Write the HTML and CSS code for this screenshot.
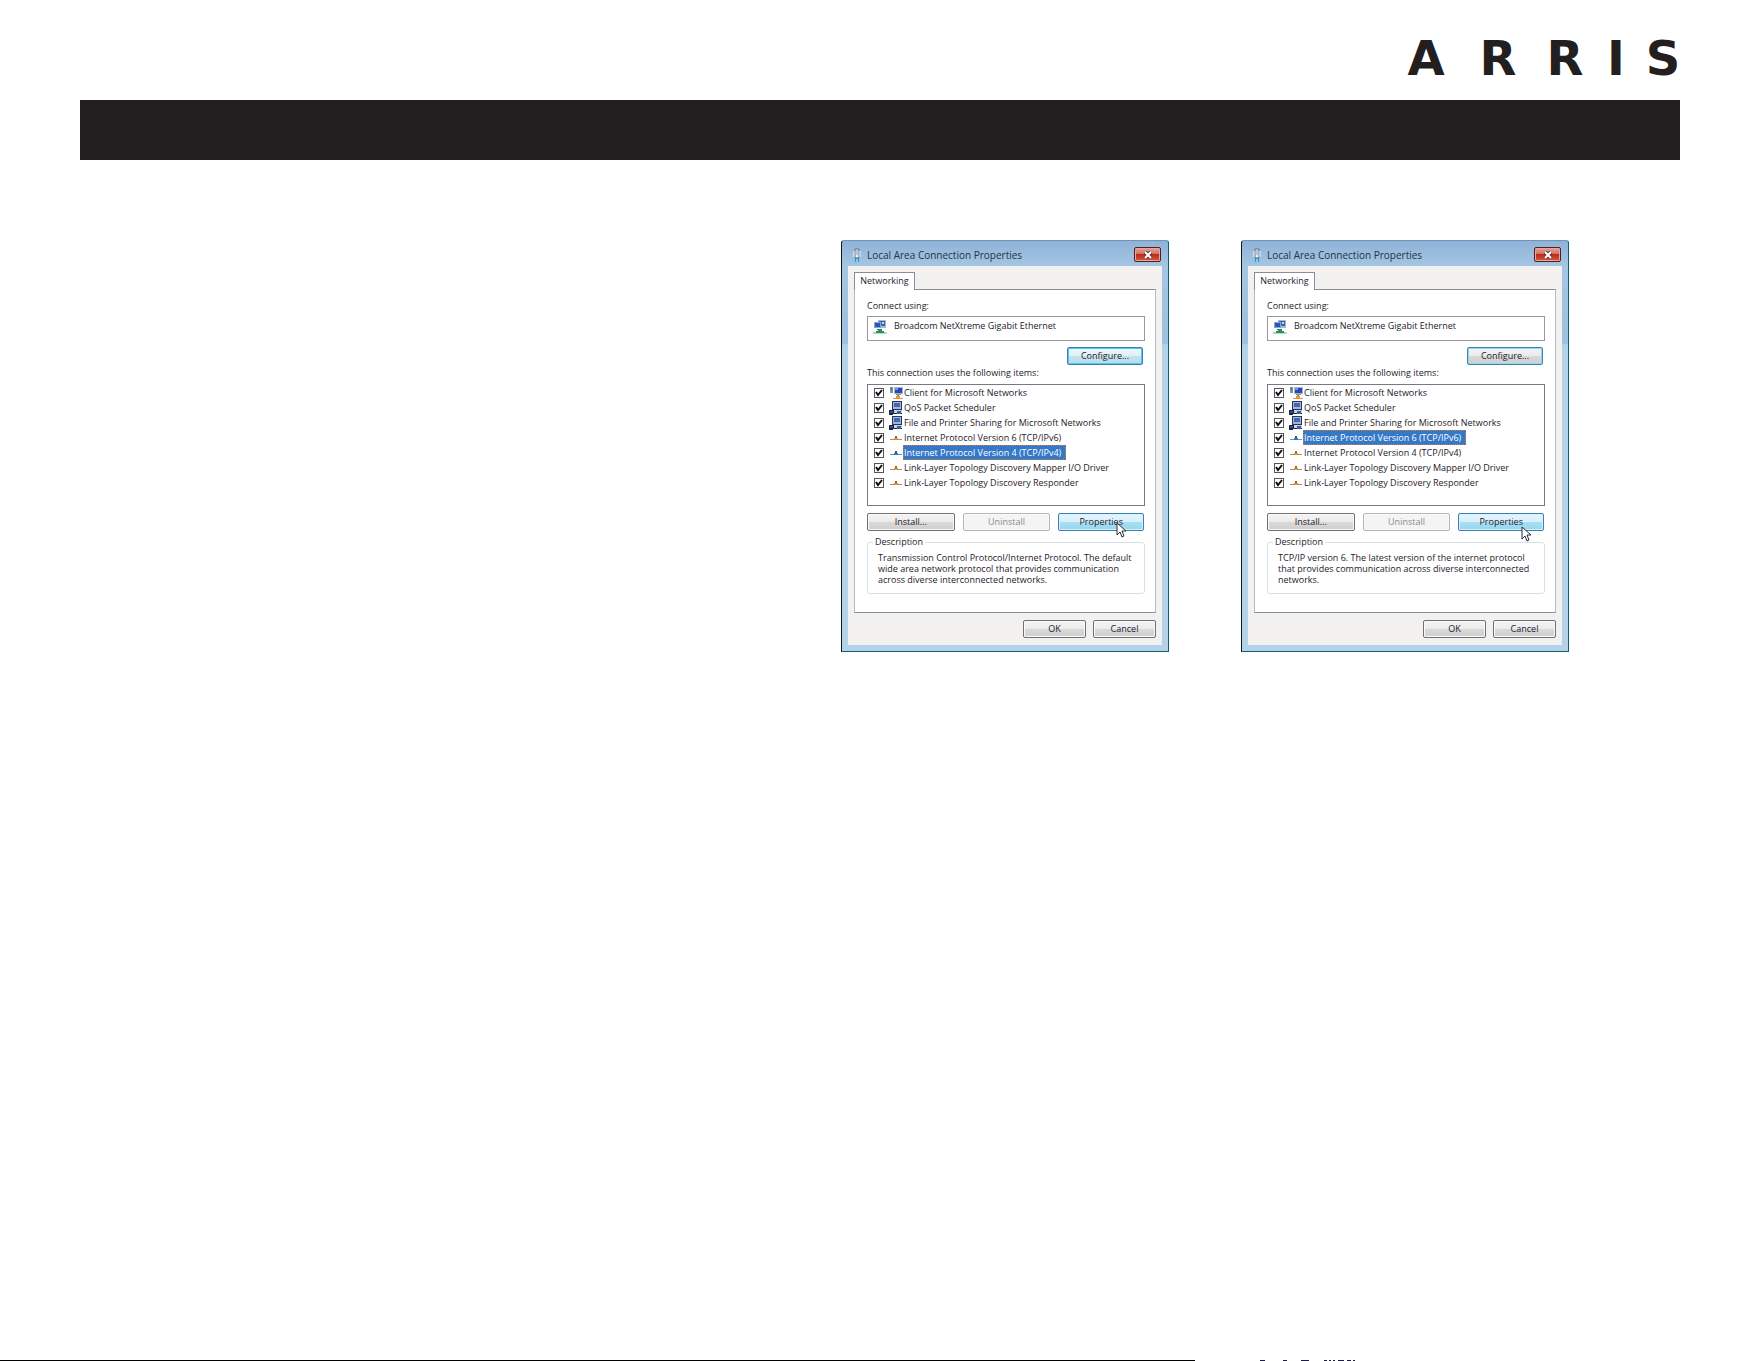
FILE: index.html
```html
<!DOCTYPE html>
<html lang="en">
<head>
<meta charset="UTF-8" />
<meta name="viewport" content="width=device-width, initial-scale=1" />
<title>Local Area Connection Properties</title>
<link rel="stylesheet" href="styles.css">
</head>
<body>
  <!-- Shared icons -->
  <svg class="sprite" aria-hidden="true">
    <symbol id="icon-plug" viewBox="0 0 8 14">
      <path d="M2 1h4v9H2z" fill="#eef3f8" stroke="#56687c"/>
      <path d="M4 2v5" stroke="#8b98a8"/>
      <path d="M1 3v6M7 3v6" stroke="#f4f8fc"/>
      <path d="M2 10h4v1H2zM2 11h1v3H2zM5 11h1v3H5z" fill="#1f9ad0"/>
    </symbol>
    <symbol id="icon-adapter" viewBox="0 0 14 14">
      <path d="M5 0h8v8H5z" fill="#a9bccb"/>
      <path d="M6 1h6v5H6z" fill="#3c62b8"/>
      <path d="M1 2h7v6H1z" fill="#8fa8c0"/>
      <path d="M2 3h5v4H2z" fill="#2b50c8"/>
      <path d="M9 2h2v2H9z" fill="#b9d8ff"/>
      <path d="M4 9h5v1H4z" fill="#5c7282"/>
      <path d="M0 12h14v2H0z" fill="#c4cccc"/>
      <path d="M5 9h4v2h2v2H3v-2h2z" fill="#1b9a58"/>
    </symbol>
    <symbol id="icon-client" viewBox="0 0 14 14">
      <path d="M1 1h3v6H1z" fill="#8a948c"/>
      <path d="M2 2h1v2H2z" fill="#2f7a3c"/>
      <path d="M5 1h9v7H5z" fill="#a5b4c8"/>
      <path d="M6 2h7v5H6z" fill="#2548c0"/>
      <path d="M6 2h3v2H6z" fill="#6f9cf5"/>
      <path d="M7 8h5v1H7z" fill="#8090a4"/>
      <path d="M8 9h2v1H8z" fill="#b8860b"/>
      <path d="M4 12h10v1H4z" fill="#b0a080"/>
      <path d="M7 10h4v3H7z" fill="#e99a1c"/>
    </symbol>
    <symbol id="icon-service" viewBox="0 0 14 14">
      <path d="M3 0h10v9H3z" fill="#26335c"/>
      <path d="M4 1h8v7H4z" fill="#a3b8cc"/>
      <path d="M5 2h6v4H5z" fill="#3f68bd"/>
      <path d="M0 9h4v5H0zM4 9h9v4H4z" fill="#1c2446"/>
      <path d="M5 9h8v3H5z" fill="#c9d2dc"/>
      <path d="M1 10h3v2H1z" fill="#2b4ba0"/>
      <path d="M8 10h4v3H8z" fill="#3d5fa8"/>
    </symbol>
    <symbol id="icon-protocol" viewBox="0 0 14 14">
      <path d="M1 8h12v1H1z" fill="currentColor"/>
      <path d="M6 5h2v2H6z" fill="#8b6a2c"/>
      <path d="M5 7h4v2H5z" fill="#e0901c"/>
    </symbol>
    <symbol id="icon-protocol-on" viewBox="0 0 14 14">
      <path d="M1 8h12v1H1z" fill="#5a9bd8"/>
      <path d="M6 5h2v2H6z" fill="#36506e"/>
      <path d="M5 7h4v2H5z" fill="#3478bd"/>
    </symbol>
    <symbol id="icon-close" viewBox="0 0 10 8">
      <path d="M2 1l6 6M8 1L2 7" stroke="#66323a" stroke-width="4"/>
      <path d="M2 1l6 6M8 1L2 7" stroke="#fff" stroke-width="2"/>
    </symbol>
    <symbol id="icon-cursor" viewBox="0 0 12 17">
      <path d="M1 1v12l3-3 2 5 2-1-2-5h4z" fill="#fff" stroke="#2b2b38"/>
    </symbol>
  </svg>

  <header class="page-header">
    <div class="logo" role="img" aria-label="ARRIS">
      <span>A</span><span>R</span><span>R</span><span>I</span><span>S</span>
    </div>
    <div class="banner"></div>
  </header>

  <main class="dialogs">
    <section class="dialog">
      <div class="titlebar">
        <svg class="title-icon"><use href="#icon-plug"/></svg>
        <h2>Local Area Connection Properties</h2>
        <button type="button" class="close" aria-label="Close"><svg><use href="#icon-close"/></svg></button>
      </div>
      <div class="body">
        <button type="button" class="tab">Networking</button>
        <div class="panel">
          <p class="caption">Connect using:</p>
          <div class="adapter">
            <svg class="icon"><use href="#icon-adapter"/></svg>
            <span>Broadcom NetXtreme Gigabit Ethernet</span>
          </div>
          <button type="button" class="btn configure focus">Configure...</button>
          <p class="caption">This connection uses the following items:</p>
          <ul class="items">
            <li><input type="checkbox" id="a1" checked><svg class="icon"><use href="#icon-client"/></svg><label for="a1">Client for Microsoft Networks</label></li>
            <li><input type="checkbox" id="a2" checked><svg class="icon"><use href="#icon-service"/></svg><label for="a2">QoS Packet Scheduler</label></li>
            <li><input type="checkbox" id="a3" checked><svg class="icon"><use href="#icon-service"/></svg><label for="a3">File and Printer Sharing for Microsoft Networks</label></li>
            <li><input type="checkbox" id="a4" checked><svg class="icon"><use href="#icon-protocol"/></svg><label for="a4">Internet Protocol Version 6 (TCP/IPv6)</label></li>
            <li class="selected"><input type="checkbox" id="a5" checked><svg class="icon"><use href="#icon-protocol-on"/></svg><label for="a5">Internet Protocol Version 4 (TCP/IPv4)</label></li>
            <li><input type="checkbox" id="a6" checked><svg class="icon"><use href="#icon-protocol"/></svg><label for="a6">Link-Layer Topology Discovery Mapper I/O Driver</label></li>
            <li><input type="checkbox" id="a7" checked><svg class="icon"><use href="#icon-protocol"/></svg><label for="a7">Link-Layer Topology Discovery Responder</label></li>
          </ul>
          <div class="actions">
            <button type="button" class="btn">Install...</button>
            <button type="button" class="btn" disabled>Uninstall</button>
            <div class="hovered">
              <button type="button" class="btn hot">Properties</button>
              <svg class="cursor"><use href="#icon-cursor"/></svg>
            </div>
          </div>
          <fieldset class="description">
            <legend>Description</legend>
            <p>Transmission Control Protocol/Internet Protocol. The default<br>wide area network protocol that provides communication<br>across diverse interconnected networks.</p>
          </fieldset>
        </div>
        <div class="dialog-buttons">
          <button type="button" class="btn">OK</button>
          <button type="button" class="btn">Cancel</button>
        </div>
      </div>
    </section>

    <section class="dialog">
      <div class="titlebar">
        <svg class="title-icon"><use href="#icon-plug"/></svg>
        <h2>Local Area Connection Properties</h2>
        <button type="button" class="close" aria-label="Close"><svg><use href="#icon-close"/></svg></button>
      </div>
      <div class="body">
        <button type="button" class="tab">Networking</button>
        <div class="panel">
          <p class="caption">Connect using:</p>
          <div class="adapter">
            <svg class="icon"><use href="#icon-adapter"/></svg>
            <span>Broadcom NetXtreme Gigabit Ethernet</span>
          </div>
          <button type="button" class="btn configure">Configure...</button>
          <p class="caption">This connection uses the following items:</p>
          <ul class="items">
            <li><input type="checkbox" id="b1" checked><svg class="icon"><use href="#icon-client"/></svg><label for="b1">Client for Microsoft Networks</label></li>
            <li><input type="checkbox" id="b2" checked><svg class="icon"><use href="#icon-service"/></svg><label for="b2">QoS Packet Scheduler</label></li>
            <li><input type="checkbox" id="b3" checked><svg class="icon"><use href="#icon-service"/></svg><label for="b3">File and Printer Sharing for Microsoft Networks</label></li>
            <li class="selected"><input type="checkbox" id="b4" checked><svg class="icon"><use href="#icon-protocol-on"/></svg><label for="b4">Internet Protocol Version 6 (TCP/IPv6)</label></li>
            <li><input type="checkbox" id="b5" checked><svg class="icon"><use href="#icon-protocol"/></svg><label for="b5">Internet Protocol Version 4 (TCP/IPv4)</label></li>
            <li><input type="checkbox" id="b6" checked><svg class="icon"><use href="#icon-protocol"/></svg><label for="b6">Link-Layer Topology Discovery Mapper I/O Driver</label></li>
            <li><input type="checkbox" id="b7" checked><svg class="icon"><use href="#icon-protocol"/></svg><label for="b7">Link-Layer Topology Discovery Responder</label></li>
          </ul>
          <div class="actions">
            <button type="button" class="btn">Install...</button>
            <button type="button" class="btn" disabled>Uninstall</button>
            <div class="hovered">
              <button type="button" class="btn hot">Properties</button>
              <svg class="cursor cursor-low"><use href="#icon-cursor"/></svg>
            </div>
          </div>
          <fieldset class="description">
            <legend>Description</legend>
            <p>TCP/IP version 6. The latest version of the internet protocol<br>that provides communication across diverse interconnected<br>networks.</p>
          </fieldset>
        </div>
        <div class="dialog-buttons">
          <button type="button" class="btn">OK</button>
          <button type="button" class="btn">Cancel</button>
        </div>
      </div>
    </section>
  </main>

  <footer class="page-footer">
    <div class="rule"></div>
    <svg class="marks" viewBox="0 0 95 1" aria-hidden="true">
      <path d="M0 0h5v1H0zM23 0h4v1h-4zM41 0h8v1h-8zM64 0h3v1h-3zM69 0h2v1h-2zM73 0h2v1h-2zM78 0h6v1h-6zM87 0h4v1h-4zM93 0h2v1h-2z" fill="#1c1c4c"/>
    </svg>
  </footer>
</body>
</html>
```
FILE: styles.css
```css
* { box-sizing: border-box; }
body {
  display: flex;
  flex-direction: column;
  min-height: 100vh;
  margin: 0;
  background: #fff;
  color: #1e1a2a;
  font-family: "Open Sans", sans-serif;
  font-size: 9px;
  line-height: 12px;
}
h2, p, ul { margin: 0; padding: 0; }
button, input { margin: 0; font: inherit; color: inherit; }
.sprite { display: none; }

.page-header {
  padding: 34px 81px 0 80px;
}
.logo {
  display: grid;
  grid-template-columns: 52px 42px 42px 10px 34px;
  justify-content: end;
  justify-items: center;
  gap: 25px;
  height: 48px;
  margin-bottom: 18px;
  color: #231f20;
  font-family: "DejaVu Sans", sans-serif;
  font-size: 48px;
  font-weight: bold;
  line-height: 48px;
}
.banner {
  height: 60px;
  background: #231f20;
}

.dialogs {
  display: flex;
  flex: 1;
  justify-content: flex-end;
  align-items: flex-start;
  gap: 72px;
  padding: 80px 192px 0 0;
}
.dialog {
  width: 328px;
  padding: 0 6px 6px;
  border: 1px solid #14606c;
  border-top-color: #6f94b8;
  border-left-color: #101820;
  border-radius: 3px 3px 0 0;
  background: linear-gradient(#8fb3d8, #a5c6e3 26px, #9cc0e0 102px, #b4d2e9 104px);
}
.titlebar {
  display: flex;
  align-items: center;
  height: 25px;
  padding: 2px 1px 0 5px;
}
.titlebar h2 {
  flex: 1;
  color: #263344;
  font-size: 10px;
  font-weight: normal;
}
.title-icon {
  width: 8px;
  height: 14px;
  margin-right: 6px;
}
.close {
  display: flex;
  align-items: center;
  justify-content: center;
  width: 27px;
  height: 15px;
  padding: 0;
  border: 1px solid #571d1d;
  border-radius: 2px;
  background: linear-gradient(#dfa398, #cf6f60 50%, #b72b1a 50%, #d55a3a);
  box-shadow: inset 0 0 0 1px #e8a69a;
}
.close svg { width: 10px; height: 8px; }

.body {
  padding: 6px 6px 7px;
  background: #f2f1f0;
}
.tab {
  display: block;
  position: relative;
  width: 61px;
  height: 18px;
  margin-bottom: -1px;
  padding: 0 0 2px;
  border: 1px solid #8b8d98;
  border-bottom: 0;
  background: #fff;
}
.panel {
  padding: 10px 10px 18px 12px;
  border: 1px solid #8b8d98;
  border-left-color: #b9bbc4;
  border-right-color: #b9bbc4;
  background: #fff;
}
.icon {
  flex: none;
  width: 14px;
  height: 14px;
  color: #9c9384;
}
.adapter {
  display: flex;
  gap: 7px;
  height: 25px;
  margin: 4px 0 6px;
  padding: 3px 5px;
  border: 1px solid #9b9b9f;
}

.btn {
  height: 18px;
  padding: 0;
  border: 1px solid #707070;
  border-radius: 2px;
  background: linear-gradient(#f4f4f4, #ebebeb 50%, #d9d9d9 50%, #cfcfcf);
  box-shadow: inset 0 0 0 1px #fafafa;
  line-height: 14px;
}
.btn:disabled {
  border-color: #b4b6b8;
  background: #f4f4f4;
  color: #8a8a8e;
}
.configure {
  display: block;
  width: 76px;
  margin: 0 2px 2px auto;
  border-color: #3c7fb1;
  box-shadow: inset 0 0 0 1px #8fdcee;
}
.focus {
  background: linear-gradient(#eef7fa, #e0f0f5 50%, #c4e2ec 50%, #b8dce9);
  box-shadow: inset 0 0 0 1px #4cc8e8;
}
.hot {
  border-color: #3c7fb1;
  background: linear-gradient(#e6f6fd, #d6effb 50%, #a9dff3 50%, #98d5ee);
  box-shadow: inset 0 0 0 1px #d8f2fc;
}

.items {
  min-height: 122px;
  margin: 5px 0 7px;
  padding: 0 6px;
  border: 1px solid #777985;
  list-style: none;
}
.items li {
  display: flex;
  align-items: center;
  height: 15px;
}
.items input {
  flex: none;
  appearance: none;
  width: 10px;
  height: 10px;
  margin-right: 5px;
  border: 1px solid #55565c;
  background: #fff;
}
.items input:checked {
  background-image: url("data:image/svg+xml,%3Csvg xmlns='http://www.w3.org/2000/svg' viewBox='0 0 8 8'%3E%3Cpath d='M1 3l2 3 4-5' fill='none' stroke='%23111' stroke-width='2'/%3E%3C/svg%3E");
}
.items label {
  padding: 0 1px;
  line-height: 15px;
  white-space: nowrap;
}
.selected label {
  padding-right: 5px;
  background: #3478c8;
  color: #fff;
  outline: 1px dotted #d87838;
  outline-offset: -1px;
}

.actions {
  display: flex;
  gap: 8px;
  padding-right: 1px;
}
.actions > * { flex: 1; }
.hovered { position: relative; }
.hovered .btn { display: block; width: 100%; }
/* pointer lies over the button */
.cursor {
  position: absolute;
  top: 9px;
  left: 58px;
  width: 12px;
  height: 17px;
}
.cursor-low {
  top: 13px;
  left: 63px;
}

.description {
  min-width: 0;
  margin: 5px 0 0;
  padding: 4px 10px 8px;
  border: 1px solid #d5e2e5;
  border-radius: 3px;
}
.description legend {
  margin-left: -5px;
  padding: 0 2px;
}
.description p {
  line-height: 11px;
  white-space: nowrap;
}

.dialog-buttons {
  display: flex;
  justify-content: flex-end;
  gap: 7px;
  padding-top: 7px;
}
.dialog-buttons .btn { width: 63px; }

.page-footer {
  display: flex;
  gap: 65px;
  height: 1px;
}
.rule {
  width: 1195px;
  background: #000;
}
.marks {
  width: 95px;
  height: 1px;
}
```
